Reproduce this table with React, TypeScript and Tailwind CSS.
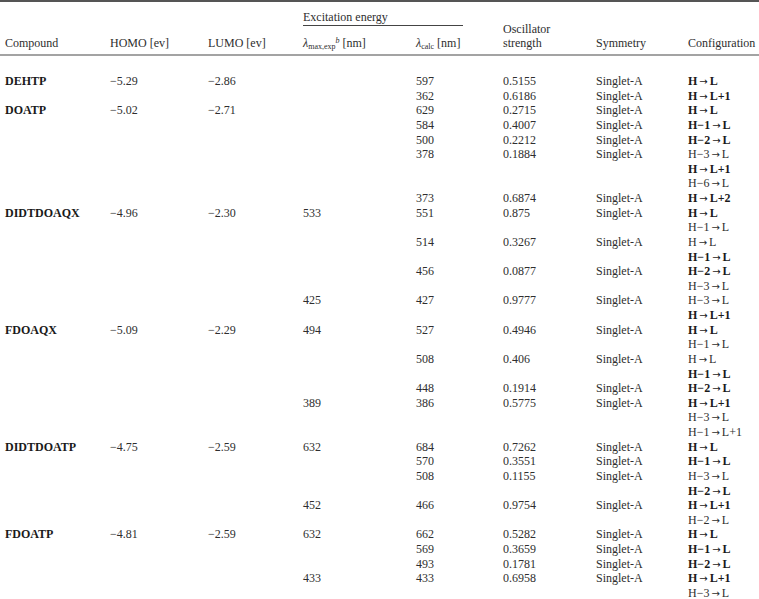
import React from 'react';

type Row = {
  compound?: string;
  homo?: string;
  lumo?: string;
  exp?: string;
  calc?: string;
  osc?: string;
  sym?: string;
  config: string;
  bold?: boolean;
};

const S = 'Singlet-A';

const rows: Row[] = [
  { compound: 'DEHTP', homo: '−5.29', lumo: '−2.86', calc: '597', osc: '0.5155', sym: S, config: 'H → L', bold: true },
  { calc: '362', osc: '0.6186', sym: S, config: 'H → L+1', bold: true },
  { compound: 'DOATP', homo: '−5.02', lumo: '−2.71', calc: '629', osc: '0.2715', sym: S, config: 'H → L', bold: true },
  { calc: '584', osc: '0.4007', sym: S, config: 'H−1 → L', bold: true },
  { calc: '500', osc: '0.2212', sym: S, config: 'H−2 → L', bold: true },
  { calc: '378', osc: '0.1884', sym: S, config: 'H−3 → L' },
  { config: 'H → L+1', bold: true },
  { config: 'H−6 → L' },
  { calc: '373', osc: '0.6874', sym: S, config: 'H → L+2', bold: true },
  { compound: 'DIDTDOAQX', homo: '−4.96', lumo: '−2.30', exp: '533', calc: '551', osc: '0.875', sym: S, config: 'H → L', bold: true },
  { config: 'H−1 → L' },
  { calc: '514', osc: '0.3267', sym: S, config: 'H → L' },
  { config: 'H−1 → L', bold: true },
  { calc: '456', osc: '0.0877', sym: S, config: 'H−2 → L', bold: true },
  { config: 'H−3 → L' },
  { exp: '425', calc: '427', osc: '0.9777', sym: S, config: 'H−3 → L' },
  { config: 'H → L+1', bold: true },
  { compound: 'FDOAQX', homo: '−5.09', lumo: '−2.29', exp: '494', calc: '527', osc: '0.4946', sym: S, config: 'H → L', bold: true },
  { config: 'H−1 → L' },
  { calc: '508', osc: '0.406', sym: S, config: 'H → L' },
  { config: 'H−1 → L', bold: true },
  { calc: '448', osc: '0.1914', sym: S, config: 'H−2 → L', bold: true },
  { exp: '389', calc: '386', osc: '0.5775', sym: S, config: 'H → L+1', bold: true },
  { config: 'H−3 → L' },
  { config: 'H−1 → L+1' },
  { compound: 'DIDTDOATP', homo: '−4.75', lumo: '−2.59', exp: '632', calc: '684', osc: '0.7262', sym: S, config: 'H → L', bold: true },
  { calc: '570', osc: '0.3551', sym: S, config: 'H−1 → L', bold: true },
  { calc: '508', osc: '0.1155', sym: S, config: 'H−3 → L' },
  { config: 'H−2 → L', bold: true },
  { exp: '452', calc: '466', osc: '0.9754', sym: S, config: 'H → L+1', bold: true },
  { config: 'H−2 → L' },
  { compound: 'FDOATP', homo: '−4.81', lumo: '−2.59', exp: '632', calc: '662', osc: '0.5282', sym: S, config: 'H → L', bold: true },
  { calc: '569', osc: '0.3659', sym: S, config: 'H−1 → L', bold: true },
  { calc: '493', osc: '0.1781', sym: S, config: 'H−2 → L', bold: true },
  { exp: '433', calc: '433', osc: '0.6958', sym: S, config: 'H → L+1', bold: true },
  { config: 'H−3 → L' },
];

// column tracks, left edge to left edge
const grid = 'grid grid-cols-[110px_98px_95px_113px_87px_93px_92px_90px]';

const Config: React.FC<{ text: string; bold?: boolean }> = ({ text, bold }) => {
  const [left, right] = text.split(' → ');
  return (
    <span className={bold ? 'font-bold text-[#1a1a1a]' : ''}>
      {left}
      <span className="font-['DejaVu_Sans',sans-serif] font-normal text-[10px] mx-[2px]">→</span>
      {right}
    </span>
  );
};

export default function App() {
  return (
    <div className="w-[759px] h-[599px] overflow-hidden bg-white text-[#2e2e2e] text-[12px] leading-[14.6px] font-['Liberation_Serif',serif]">
      <div className="w-[778px] border-t-2 border-[#555]">
        {/* header */}
        <div className={`${grid} h-[49px] items-end pb-[3px] border-b-2 border-[#a3a3a3] box-content`}>
          <div className="pl-[5px]">Compound</div>
          <div>HOMO [ev]</div>
          <div>LUMO [ev]</div>
          <div className="col-span-2 flex flex-col">
            <div className="mr-[40px] border-b border-[#444] pb-[1px] mb-[10px]">Excitation energy</div>
            <div className="flex">
              <div className="w-[113px] whitespace-nowrap">
                <i>λ</i>
                <sub className="text-[8px]">max,exp</sub>
                <sup className="text-[8px] italic">b</sup> [nm]
              </div>
              <div className="whitespace-nowrap">
                <i>λ</i>
                <sub className="text-[8px]">calc</sub> [nm]
              </div>
            </div>
          </div>
          <div>
            Oscillator
            <br />
            strength
          </div>
          <div>Symmetry</div>
          <div className="whitespace-nowrap">Configuration</div>
        </div>

        {/* body */}
        <div className="pt-[18px]">
          {rows.map((r, i) => (
            <div key={i} className={`${grid} h-[14.63px] whitespace-nowrap`}>
              <div className="pl-[5px] font-bold text-[#1a1a1a]">{r.compound}</div>
              <div>{r.homo}</div>
              <div>{r.lumo}</div>
              <div>{r.exp}</div>
              <div>{r.calc}</div>
              <div>{r.osc}</div>
              <div>{r.sym}</div>
              <div>
                <Config text={r.config} bold={r.bold} />
              </div>
            </div>
          ))}
        </div>
      </div>
    </div>
  );
}
